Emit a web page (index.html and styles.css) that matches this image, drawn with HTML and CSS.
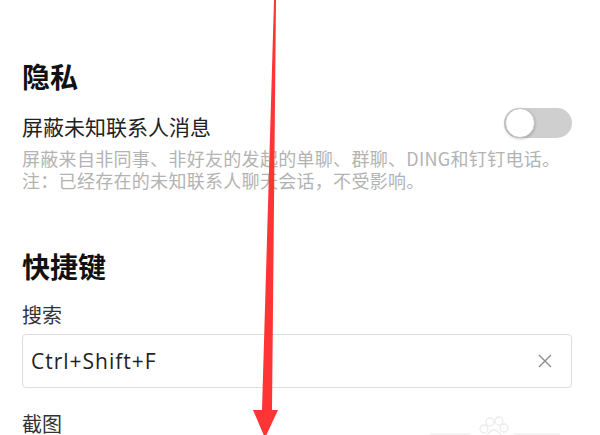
FILE: index.html
```html
<!DOCTYPE html>
<html lang="zh-CN">

<head>
    <meta charset="UTF-8">
    <meta name="viewport" content="width=device-width, initial-scale=1.0">
    <title>设置</title>
    <link rel="stylesheet" href="styles.css">
</head>

<body>
    <div class="page">
        <h2 class="section-title">隐私</h2>

        <div class="setting-row">
            <div class="setting-name">屏蔽未知联系人消息</div>
            <div class="toggle"><div class="toggle-knob"></div></div>
        </div>
        <div class="setting-desc">
            屏蔽来自非同事、非好友的发起的单聊、群聊、DING和钉钉电话。<br>
            注：已经存在的未知联系人聊天会话，不受影响。
        </div>

        <h2 class="section-title shortcut-title">快捷键</h2>

        <div class="field-label">搜索</div>
        <div class="key-input">
            <span class="key-text">Ctrl+Shift+F</span>
            <svg class="clear-icon" width="14" height="14" viewBox="0 0 14 14">
                <path d="M1 1 L13 13 M13 1 L1 13" stroke="#8a8a8a" stroke-width="1.4" fill="none" />
            </svg>
        </div>

        <div class="field-label shot-label">截图</div>
    </div>

    <!-- 红色箭头标注 -->
    <svg class="arrow" width="600" height="435" viewBox="0 0 600 435">
        <polygon points="274,0 276,0 272,410 278,410 265,438 253,410 262,410" fill="#ff3434" />
    </svg>

    <!-- 水印 -->
    <svg class="watermark" width="130" height="22" viewBox="0 0 130 22">
        <g fill="none" stroke="#ececec" stroke-width="1.3">
            <circle cx="60" cy="9" r="4" />
            <circle cx="69" cy="8" r="4" />
            <circle cx="54" cy="16" r="4" />
            <circle cx="74" cy="15" r="4" />
            <path d="M57 22 Q64 12 71 22" />
        </g>
        <rect x="0" y="20" width="40" height="2" fill="#f4f4f4" />
        <rect x="84" y="20" width="46" height="2" fill="#f4f4f4" />
    </svg>
</body>

</html>
```

FILE: styles.css
```css
body {
    margin: 0;
    background-color: #ffffff;
    font-family: "Noto Sans CJK SC", "Noto Sans", sans-serif;
    overflow: hidden;
}

.page {
    padding: 59px 28px 0 22px;
}

.section-title {
    margin: 0;
    font-size: 28px;
    line-height: 34px;
    font-weight: bold;
    color: #111111;
}

.shortcut-title {
    margin-top: 58px;
}

.setting-row {
    margin-top: 20px;
    display: flex;
    justify-content: space-between;
    align-items: flex-start;
}

.setting-name {
    font-size: 21px;
    line-height: 26px;
    color: #222222;
}

.toggle {
    width: 68px;
    height: 30px;
    margin-top: -5px;
    border-radius: 15px;
    background-color: #cfcfcf;
    display: flex;
    align-items: center;
    padding: 0 1px;
    box-sizing: border-box;
}

.toggle-knob {
    width: 30px;
    height: 30px;
    border-radius: 50%;
    background-color: #ffffff;
    box-sizing: border-box;
    border: 1px solid #c4c4c4;
    box-shadow: 0 1px 3px rgba(0, 0, 0, 0.25);
}

.setting-desc {
    margin-top: 8px;
    font-size: 18px;
    line-height: 22px;
    letter-spacing: 0.3px;
    color: #b3b3b3;
}

.field-label {
    margin-top: 19px;
    font-size: 20px;
    line-height: 26px;
    color: #333333;
}

.shot-label {
    margin-top: 23px;
}

.key-input {
    margin-top: 6px;
    height: 54px;
    border: 1px solid #dddddd;
    border-radius: 4px;
    box-sizing: border-box;
    display: flex;
    align-items: center;
    justify-content: space-between;
    padding: 0 19px 0 8px;
}

.key-text {
    font-family: "Open Sans", "Noto Sans", sans-serif;
    font-size: 21px;
    letter-spacing: 1px;
    color: #222222;
}

.arrow {
    position: absolute;
    left: 0;
    top: 0;
    pointer-events: none;
}

.watermark {
    position: absolute;
    left: 430px;
    top: 413px;
}
```
